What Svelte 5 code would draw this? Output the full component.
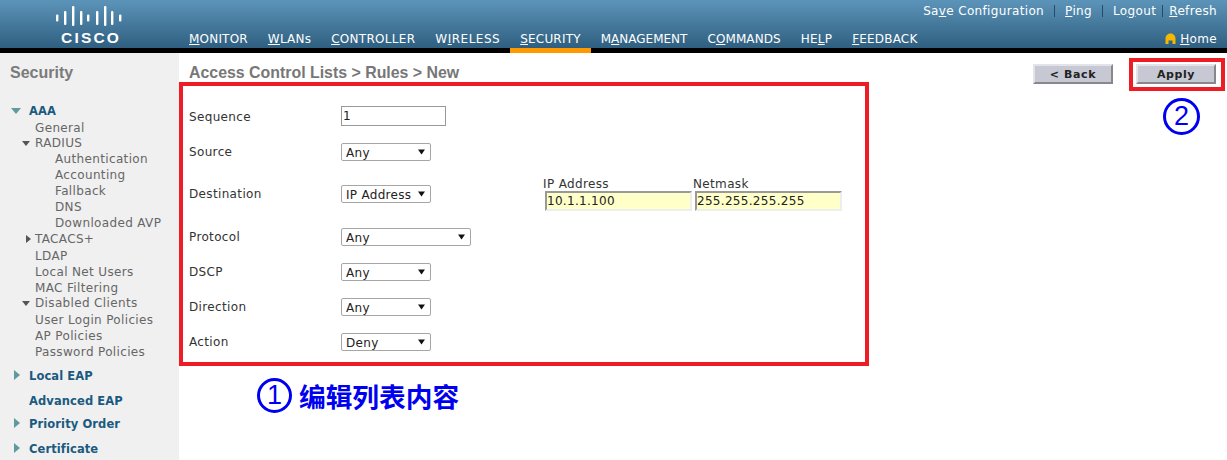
<script>
	const nav = [
		{ a: '', u: 'M', b: 'ONITOR', ls: 0.2 },
		{ a: '', u: 'W', b: 'LANs', ls: 0.2 },
		{ a: '', u: 'C', b: 'ONTROLLER', ls: 0.3 },
		{ a: 'W', u: 'I', b: 'RELESS', ls: 0.5 },
		{ a: '', u: 'S', b: 'ECURITY', ls: 0.2, active: true },
		{ a: 'M', u: 'A', b: 'NAGEMENT', ls: 0 },
		{ a: 'C', u: 'O', b: 'MMANDS', ls: 0.1 },
		{ a: 'HE', u: 'L', b: 'P', ls: 0.2 },
		{ a: '', u: 'F', b: 'EEDBACK', ls: 0.2 }
	];

	const side = [
		{ label: 'AAA', cls: 'head first', arrow: 'open-big' },
		{ label: 'General', cls: 'l1' },
		{ label: 'RADIUS', cls: 'l1 tight', arrow: 'open' },
		{ label: 'Authentication', cls: 'l2' },
		{ label: 'Accounting', cls: 'l2' },
		{ label: 'Fallback', cls: 'l2' },
		{ label: 'DNS', cls: 'l2' },
		{ label: 'Downloaded AVP', cls: 'l2' },
		{ label: 'TACACS+', cls: 'l1', arrow: 'closed' },
		{ label: 'LDAP', cls: 'l1 push' },
		{ label: 'Local Net Users', cls: 'l1' },
		{ label: 'MAC Filtering', cls: 'l1' },
		{ label: 'Disabled Clients', cls: 'l1 tight', arrow: 'open' },
		{ label: 'User Login Policies', cls: 'l1 push' },
		{ label: 'AP Policies', cls: 'l1' },
		{ label: 'Password Policies', cls: 'l1' },
		{ label: 'Local EAP', cls: 'head', arrow: 'closed-big' },
		{ label: 'Advanced EAP', cls: 'head gap' },
		{ label: 'Priority Order', cls: 'head close', arrow: 'closed-big' },
		{ label: 'Certificate', cls: 'head gap', arrow: 'closed-big' }
	];

	const bars = [
		[57, 7],
		[65, 14],
		[73, 20],
		[81, 14],
		[88, 7],
		[97, 14],
		[105, 20],
		[112, 14],
		[120, 7]
	];
</script>

<div class="page">
	<header class="top">
		<div class="brand">
			<svg class="bars" width="179" height="30" viewBox="0 0 179 30">
				{#each bars as [x, h]}
					<rect x={x - 1} y={15 - h / 2 + (h === 20 ? 0 : 2)} width="2.4" height={h} rx="1" fill="#fff" />
				{/each}
			</svg>
			<span class="cisco">CISCO</span>
		</div>
		<div class="top-main">
			<div class="utils">
				<span>Sa<u>v</u>e Configuration</span><i></i>
				<span><u>P</u>ing</span><i></i>
				<span>Lo<u>g</u>out</span><i class="near"></i>
				<span><u>R</u>efresh</span>
			</div>
			<div class="navrow">
				<nav>
					{#each nav as n}
						<span class="nav-item" style="letter-spacing: {n.ls}px">{n.a}<u>{n.u}</u>{n.b}</span>
					{/each}
				</nav>
				<span class="home">
					<svg width="11" height="12" viewBox="0 0 11 12">
						<path d="M0.5 11V5.5C0.5 2.5 3 0.5 5.5 0.5S10.500 2.500 10.500 5.500V11H7.500V7.500H3.500V11Z" fill="#f5b800" />
					</svg>
					<span><u>H</u>ome</span>
				</span>
			</div>
		</div>
	</header>
	<div class="blackbar"><span class="orange"></span></div>

	<div class="body">
		<aside class="sidebar">
			<h2>Security</h2>
			<ul>
				{#each side as item}
					<li class={item.cls}>
						{#if item.arrow}<span class="arrow {item.arrow}"></span>{/if}
						{item.label}
					</li>
				{/each}
			</ul>
		</aside>

		<main class="content">
			<div class="titlebar">
				<h1>Access Control Lists &gt; Rules &gt; New</h1>
				<div class="buttons">
					<button class="btn">&lt; Back</button>
					<button class="btn">Apply</button>
				</div>
			</div>

			<div class="form">
				<div class="row r-seq">
					<label for="seq">Sequence</label>
					<input id="seq" class="seq" value="1" />
				</div>
				<div class="row r-src">
					<label for="src">Source</label>
					<select id="src" class="w90"><option>Any</option></select>
				</div>
				<div class="row r-dst">
					<label for="dst">Destination</label>
					<select id="dst" class="w90"><option>IP Address</option></select>
					<div class="ipfields">
						<div class="ipfield">
							<span>IP Address</span>
							<input class="ip" value="10.1.1.100" />
						</div>
						<div class="ipfield">
							<span>Netmask</span>
							<input class="ip" value="255.255.255.255" />
						</div>
					</div>
				</div>
				<div class="row r-proto">
					<label for="proto">Protocol</label>
					<select id="proto" class="w130"><option>Any</option></select>
				</div>
				<div class="row r-std">
					<label for="dscp">DSCP</label>
					<select id="dscp" class="w90"><option>Any</option></select>
				</div>
				<div class="row r-std">
					<label for="dir">Direction</label>
					<select id="dir" class="w90"><option>Any</option></select>
				</div>
				<div class="row r-std">
					<label for="act">Action</label>
					<select id="act" class="w90"><option>Deny</option></select>
				</div>
			</div>
		</main>
	</div>

	<!-- red/blue markup drawn on top of the screenshot -->
	<div class="mark box-form"></div>
	<div class="mark box-apply"></div>
	<div class="note note-1"><span class="circle c1">1</span><span class="note-text">编辑列表内容</span></div>
	<div class="note note-2"><span class="circle c2">2</span></div>
</div>

<style>
	:global(body) {
		margin: 0;
		background: #fff;
	}
	.page {
		position: relative;
		width: 1227px;
		height: 460px;
		overflow: hidden;
		font-family: 'DejaVu Sans', Verdana, sans-serif;
		font-size: 12px;
		letter-spacing: 0.35px;
		color: #444;
	}

	.top {
		display: flex;
		height: 48px;
		background: linear-gradient(#5c94b9, #2f5f80);
		color: #fff;
	}
	.brand {
		width: 189px;
		flex-shrink: 0;
	}
	.bars {
		display: block;
		margin-top: 1px;
	}
	.cisco {
		display: block;
		margin: -1px 0 0 61px;
		font: bold 15.500px/15px 'Liberation Sans', Arial, sans-serif;
		letter-spacing: 2.2px;
	}
	.top-main {
		flex: 1;
		display: flex;
		flex-direction: column;
		justify-content: space-between;
	}
	.utils {
		display: flex;
		justify-content: flex-end;
		align-items: center;
		height: 20px;
		margin-top: 1px;
		padding-right: 10px;
	}
	.utils i {
		width: 1px;
		height: 12px;
		margin: 0 10px;
		background: #234c6a;
	}
	.utils i.near {
		margin: 0 6px;
	}
	.navrow {
		display: flex;
		justify-content: space-between;
		align-items: center;
		height: 20px;
		margin-bottom: -1px;
		padding-right: 10px;
	}
	nav {
		display: flex;
		gap: 20px;
	}
	.nav-item {
		white-space: nowrap;
	}
	.home {
		display: flex;
		align-items: center;
		gap: 4px;
	}

	.blackbar {
		height: 5px;
		background: #000;
	}
	.orange {
		display: block;
		width: 81px;
		height: 5px;
		margin-left: 510px;
		background: #f90;
	}

	.body {
		display: flex;
		height: 407px;
	}
	.sidebar {
		width: 179px;
		flex-shrink: 0;
		background: #f0f0f0;
		color: #666;
	}
	.sidebar h2 {
		margin: 11px 0 0 10px;
		font: bold 16px/18px 'Liberation Sans', Arial, sans-serif;
		letter-spacing: 0;
		color: #7b7b7b;
	}
	.sidebar ul {
		list-style: none;
		margin: 0;
		padding: 0;
	}
	.sidebar li {
		position: relative;
		height: 16px;
		line-height: 16px;
		white-space: nowrap;
	}
	.sidebar .tight {
		margin-top: -1px;
	}
	.sidebar .push {
		margin-top: 1px;
	}
	.l1 {
		padding-left: 35px;
	}
	.l2 {
		padding-left: 55px;
	}
	.sidebar .head {
		padding-left: 29px;
		font-size: 11.500px;
		font-weight: bold;
		letter-spacing: 0.1px;
		color: #1b5a80;
		margin-top: 8px;
	}
	.sidebar .first {
		margin-top: 21px;
		margin-bottom: 1px;
	}
	.sidebar .gap {
		margin-top: 9px;
	}
	.sidebar .close {
		margin-top: 7px;
	}
	.arrow {
		position: absolute;
		width: 0;
		height: 0;
		border-style: solid;
		border-color: transparent;
	}
	.open {
		left: 22px;
		top: 6px;
		border-width: 5px 4px 0;
		border-top-color: #555;
	}
	.closed {
		left: 26px;
		top: 4px;
		border-width: 4px 0 4px 5px;
		border-left-color: #555;
	}
	.open-big {
		left: 11px;
		top: 5px;
		border-width: 6px 5px 0;
		border-top-color: #5f9a9c;
	}
	.closed-big {
		left: 14px;
		top: 2px;
		border-width: 5px 0 5px 6px;
		border-left-color: #5f9a9c;
	}

	.content {
		flex: 1;
		padding-left: 10px;
	}
	.titlebar {
		display: flex;
		justify-content: space-between;
		height: 37px;
		padding-right: 11px;
	}
	.titlebar h1 {
		margin: 11px 0 0;
		font: bold 15.900px/18px 'Liberation Sans', Arial, sans-serif;
		letter-spacing: 0;
		color: #777;
	}
	.buttons {
		display: flex;
		gap: 23px;
		margin-top: 11px;
	}
	.btn {
		width: 80px;
		height: 20px;
		padding: 1px 0 0;
		background: #c6c8d4;
		border: 2px solid;
		border-color: #e3e3e8 #88888c #88888c #e3e3e8;
		font: bold 11px/14px 'DejaVu Sans', Verdana, sans-serif;
		color: #222;
		letter-spacing: 0.6px;
	}

	.row {
		display: grid;
		grid-template-columns: 152px auto 1fr;
		align-items: center;
		color: #333;
	}
	.r-seq {
		height: 36px;
		margin-top: 8px;
	}
	.r-seq label {
		padding-top: 1px;
	}
	.r-src {
		height: 36px;
	}
	.r-dst {
		height: 48px;
	}
	.r-proto {
		height: 36px;
		margin-top: 1px;
	}
	.r-std {
		height: 34px;
		margin-bottom: 1px;
	}
	input,
	select {
		font: 12px 'DejaVu Sans', Verdana, sans-serif;
		letter-spacing: 0.3px;
		color: #222;
		box-sizing: border-box;
	}
	.seq {
		width: 105px;
		height: 20px;
		padding: 0 1px;
		border: 1px solid #999;
	}
	select {
		appearance: none;
		height: 18px;
		padding: 1px 0 0 4px;
		background: #fff url("data:image/svg+xml,%3Csvg xmlns='http://www.w3.org/2000/svg' width='7' height='6'%3E%3Cpath d='M0 0.500H7L3.500 5.500Z' fill='%23111'/%3E%3C/svg%3E") no-repeat right 5px center;
		border: 1px solid #a6a6a6;
		border-radius: 2px;
	}
	.w90 {
		width: 90px;
	}
	.w130 {
		width: 130px;
	}
	.ipfields {
		display: flex;
		gap: 1px;
		margin-left: 112px;
	}
	.ipfield {
		display: flex;
		flex-direction: column;
	}
	.ipfield span {
		line-height: 14px;
		height: 14px;
	}
	.ip {
		width: 147px;
		height: 20px;
		margin-left: 2px;
		padding: 0;
		background: #ffffc8;
		border: 2px solid;
		border-color: #999 #eee #eee #999;
	}

	.mark {
		position: absolute;
		box-sizing: border-box;
		border: 4px solid #ee1c25;
	}
	.box-form {
		left: 179px;
		top: 82px;
		width: 690px;
		height: 284px;
	}
	.box-apply {
		left: 1129px;
		top: 58px;
		width: 96px;
		height: 33px;
	}
	.note {
		position: absolute;
		display: flex;
		align-items: center;
		color: #0000f0;
		letter-spacing: 0;
	}
	.note-1 {
		left: 257px;
		top: 378px;
		gap: 7px;
	}
	.note-2 {
		left: 1163px;
		top: 98px;
	}
	.circle {
		box-sizing: border-box;
		display: flex;
		align-items: center;
		justify-content: center;
		width: 35px;
		height: 35px;
		border: 3px solid #0000f0;
		border-radius: 50%;
		font: 27px/1 'Liberation Sans', Arial, sans-serif;
	}
	.c2 {
		width: 37px;
		height: 37px;
	}
	.note-text {
		font: bold 26.700px/34px 'Noto Sans CJK SC', sans-serif;
	}
</style>
